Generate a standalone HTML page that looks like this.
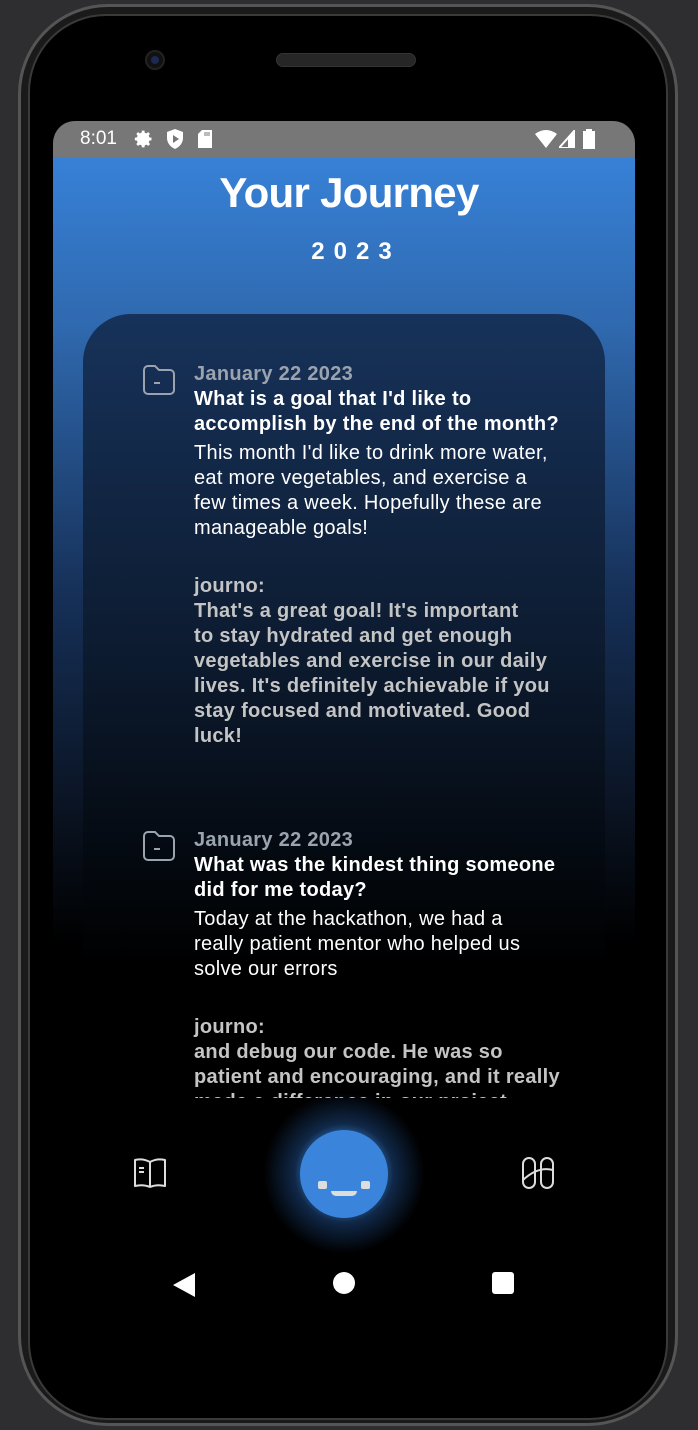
<!DOCTYPE html>
<html><head><meta charset="utf-8"><style>
*{margin:0;padding:0;box-sizing:border-box}
body{width:698px;height:1430px;background:#2e2e30;position:relative;overflow:hidden;font-family:"Liberation Sans",Roboto,sans-serif}
.phone{position:absolute;left:18px;top:4px;width:660px;height:1422px;border-radius:90px;background:#1a1a1a;border:3px solid #555}
.inner{position:absolute;left:28px;top:14px;width:640px;height:1406px;border-radius:78px;background:#000;border:2px solid #3a3a3a}
.screen{position:absolute;left:53px;top:121px;width:582px;height:1190px;border-radius:22px 22px 0 0;overflow:hidden;background:#000}
.status{height:36px;background:#777;color:#fff;font-size:19px;display:flex;align-items:center;padding-left:27px}
.app{position:absolute;top:36px;left:0;width:582px;height:1091px;background:linear-gradient(#3781d7 0%,#2f68ad 16%,#163058 40%,#0a1322 60%,#000 72%)}
h1{color:#fff;text-align:center;font-size:42px;font-weight:bold;margin-top:12px;letter-spacing:-0.7px;padding-left:10px}
.yr{color:#fff;text-align:center;font-size:24px;font-weight:bold;letter-spacing:9px;margin-top:21px;padding-left:24px}
.card{position:absolute;left:30px;top:157px;width:522px;height:1000px;border-radius:48px;background:linear-gradient(#17325a,#0c1a2e 35%,#000 65%)}
.entry{position:absolute;left:111px;width:380px;font-size:20px;line-height:25px;letter-spacing:0.3px;white-space:nowrap}
.d{color:#9aa3ae;font-weight:bold}
.q{color:#fff;font-weight:bold}
.a{color:#fff;margin-top:4px}
.j{color:#c4c4c4;font-weight:bold;margin-top:33px}
.ic{position:absolute;left:-52px;top:2px}
.nav{position:absolute;top:941px;left:0;width:582px;height:150px;background:#000}
</style></head><body>
<div class="phone"></div>
<div class="inner"></div>
<div style="position:absolute;left:145px;top:50px;width:20px;height:20px;border-radius:50%;background:#111;border:2px solid #222"><div style="margin:4px;width:8px;height:8px;border-radius:50%;background:#1a2a55"></div></div>
<div style="position:absolute;left:276px;top:53px;width:140px;height:14px;border-radius:7px;background:#262626;border:1px solid #333"></div>
<div class="screen">
<div class="status"><span>8:01</span>
<svg style="margin-left:17px" width="20" height="20" viewBox="0 0 24 24" fill="#fff"><path d="M12 8a4 4 0 100 8 4 4 0 000-8zm9 5.5v-3l-2.6-.5-.8-1.9 1.5-2.2-2.1-2.1-2.2 1.5-1.9-.8L12.5 2h-3l-.5 2.5-1.9.8-2.2-1.5-2.1 2.1 1.5 2.2-.8 1.9L1 10.5v3l2.5.5.8 1.9-1.5 2.2 2.1 2.1 2.2-1.5 1.9.8.5 2.5h3l.5-2.5 1.9-.8 2.2 1.5 2.1-2.1-1.5-2.2.8-1.9z"/></svg>
<svg style="margin-left:12px" width="18" height="20" viewBox="0 0 18 20"><path d="M9 0L1 3v6c0 5 3.5 9 8 11 4.5-2 8-6 8-11V3z" fill="#fff"/><path d="M7 6v8l6-4z" fill="#777"/></svg>
<svg style="margin-left:14px" width="14" height="18" viewBox="0 0 14 18"><path d="M4 0h10v18H0V4z" fill="#fff"/><path d="M7 2v4M9 2v4M11 2v4" stroke="#777"/></svg>
<span style="flex:1"></span>
<svg width="22" height="18" viewBox="0 0 22 18"><path d="M0 4Q11-4 22 4L11 18z" fill="#fff"/></svg>
<svg style="margin-left:2px" width="16" height="18" viewBox="0 0 16 18"><path d="M16 0v18H0z" fill="none" stroke="#fff" stroke-width="2"/><path d="M16 0v18H9V7z" fill="#fff"/></svg>
<svg style="margin-left:8px;margin-right:40px" width="12" height="20" viewBox="0 0 12 20"><path d="M3 2V0h6v2h3v18H0V2z" fill="#fff"/></svg>
</div>
<div class="app">
<h1>Your Journey</h1>
<div class="yr">2023</div>
<div class="card">
<div class="entry" style="top:48px">
<svg class="ic" width="34" height="32" viewBox="0 0 34 32" fill="none" stroke="#9aa3ae" stroke-width="2"><path d="M2 6a4 4 0 014-4h7l4 4h11a4 4 0 014 4v16a4 4 0 01-4 4H6a4 4 0 01-4-4z"/><path d="M12 19h6"/></svg>
<div class="d">January 22 2023</div>
<div class="q">What is a goal that I'd like to<br>accomplish by the end of the month?</div>
<div class="a">This month I'd like to drink more water,<br>eat more vegetables, and exercise a<br>few times a week. Hopefully these are<br>manageable goals!</div>
<div class="j">journo:<br>That's a great goal! It's important<br>to stay hydrated and get enough<br>vegetables and exercise in our daily<br>lives. It's definitely achievable if you<br>stay focused and motivated. Good<br>luck!</div>
</div>
<div class="entry" style="top:514px">
<svg class="ic" width="34" height="32" viewBox="0 0 34 32" fill="none" stroke="#9aa3ae" stroke-width="2"><path d="M2 6a4 4 0 014-4h7l4 4h11a4 4 0 014 4v16a4 4 0 01-4 4H6a4 4 0 01-4-4z"/><path d="M12 19h6"/></svg>
<div class="d">January 22 2023</div>
<div class="q">What was the kindest thing someone<br>did for me today?</div>
<div class="a">Today at the hackathon, we had a<br>really patient mentor who helped us<br>solve our errors</div>
<div class="j">journo:<br>and debug our code. He was so<br>patient and encouraging, and it really<br>made a difference in our project.</div>
</div>
</div>
<div class="nav">
<svg style="position:absolute;left:80px;top:59px" width="34" height="32" viewBox="0 0 34 32" fill="none" stroke="#ddd" stroke-width="2" stroke-linejoin="round"><path d="M2 3q8-2 15 2v25q-7-3-15-1zM32 3q-8-2-15 2v25q7-3 15-1z"/><path d="M6 11h5M6 15h5"/></svg>
<div style="position:absolute;left:201px;top:-10px;width:180px;height:170px;background:radial-gradient(circle,rgba(58,134,220,.9) 25%,rgba(40,100,180,.4) 40%,rgba(0,0,0,0) 65%)"></div>
<div style="position:absolute;left:247px;top:32px;width:88px;height:88px;border-radius:50%;background:#3a85db">
<div style="position:absolute;left:18px;top:51px;width:9px;height:8px;border-radius:2px;background:#ddd"></div>
<div style="position:absolute;left:61px;top:51px;width:9px;height:8px;border-radius:2px;background:#ddd"></div>
<div style="position:absolute;left:31px;top:61px;width:26px;height:5px;border-radius:0 0 6px 6px;background:#ddd"></div>
</div>
<svg style="position:absolute;left:468px;top:58px" width="34" height="34" viewBox="0 0 34 34" fill="none" stroke="#ddd" stroke-width="2"><rect x="2" y="2" width="12" height="30" rx="6"/><rect x="20" y="2" width="12" height="30" rx="6"/><path d="M2 24Q17 10 32 14"/></svg>
</div>
</div>
<svg style="position:absolute;left:120px;top:1152px" width="22" height="24" viewBox="0 0 22 24"><path d="M22 0v24L0 12z" fill="#fff"/></svg>
<div style="position:absolute;left:280px;top:1151px;width:22px;height:22px;border-radius:50%;background:#fff"></div>
<div style="position:absolute;left:439px;top:1151px;width:22px;height:22px;border-radius:3px;background:#fff"></div>
</div>
</body></html>
